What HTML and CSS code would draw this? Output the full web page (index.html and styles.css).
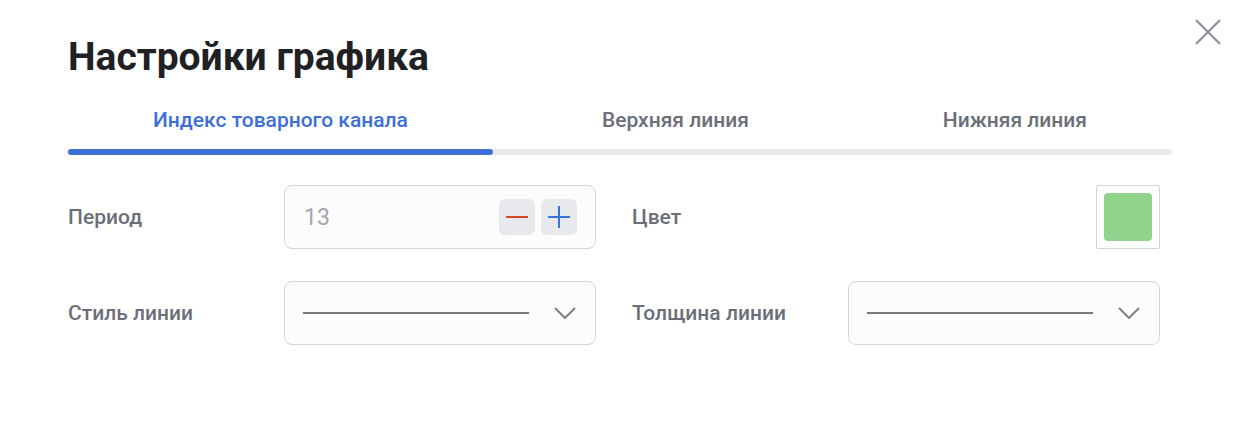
FILE: index.html
```html
<!DOCTYPE html>
<html lang="ru">
<head>
<meta charset="utf-8">
<title>Настройки графика</title>
<link rel="stylesheet" href="styles.css">
</head>
<body>
<div class="dialog">
  <button class="close" aria-label="Закрыть">
    <svg width="26" height="26" viewBox="0 0 26 26"><path d="M1 1L25 25M25 1L1 25" stroke="#8a8d94" stroke-width="2" fill="none"/></svg>
  </button>
  <h1 class="title">Настройки графика</h1>
  <div class="tabs">
    <div class="tab active">Индекс товарного канала</div>
    <div class="tab">Верхняя линия</div>
    <div class="tab">Нижняя линия</div>
  </div>
  <div class="track"><div class="indicator"></div></div>
  <div class="form">
    <div class="field">
      <div class="label">Период</div>
      <div class="control stepper">
        <span class="value">13</span>
        <div class="btns">
          <button class="step"><svg width="22" height="22" viewBox="0 0 22 22"><path d="M0 11H22" stroke="#d2492a" stroke-width="2"/></svg></button>
          <button class="step"><svg width="22" height="22" viewBox="0 0 22 22"><path d="M0 11H22M11 0V22" stroke="#3a72d6" stroke-width="2"/></svg></button>
        </div>
      </div>
    </div>
    <div class="field">
      <div class="label">Цвет</div>
      <div class="swatch-wrap"><div class="swatch"></div></div>
    </div>
    <div class="field">
      <div class="label">Стиль линии</div>
      <div class="control select">
        <span class="line"></span>
        <svg class="chev" width="22" height="12" viewBox="0 0 22 12"><path d="M1 1L11 11L21 1" stroke="#7d8088" stroke-width="2" fill="none"/></svg>
      </div>
    </div>
    <div class="field">
      <div class="label">Толщина линии</div>
      <div class="control select">
        <span class="line"></span>
        <svg class="chev" width="22" height="12" viewBox="0 0 22 12"><path d="M1 1L11 11L21 1" stroke="#7d8088" stroke-width="2" fill="none"/></svg>
      </div>
    </div>
  </div>
</div>
</body>
</html>
```

FILE: styles.css
```css
* { box-sizing: border-box; }
html, body { margin: 0; padding: 0; background: #fff; }
body { font-family: Roboto, "Noto Sans", Arial, sans-serif; width: 1240px; height: 448px; overflow: hidden; }
.dialog { position: relative; padding: 33px 68px 0 68px; }
.close { position: absolute; top: 19px; right: 19px; width: 26px; height: 26px; padding: 0; border: 0; background: none; display: flex; }
.title { margin: 0; font-size: 39px; line-height: 48px; font-weight: 700; color: #1f2124; }
.tabs { display: flex; gap: 24px; margin-top: 25px; width: 1104px; }
.tab { flex: 1 1 auto; text-align: center; font-size: 21px; font-weight: 500; line-height: 28px; color: #6b6f78; }
.tab.active { color: #3d6fd6; }
.track { margin-top: 15px; width: 1104px; height: 6px; border-radius: 3px; background: #e9eaec; display: flex; }
.indicator { width: 425px; height: 6px; border-radius: 3px; background: #3d6fd6; }
.form { display: grid; grid-template-columns: 528px 528px; column-gap: 36px; row-gap: 32px; margin-top: 30px; }
.field { display: flex; align-items: center; justify-content: space-between; height: 64px; }
.label { font-size: 21px; font-weight: 500; color: #6b6f78; }
.control { width: 312px; height: 64px; border: 1px solid #d3d4d8; border-radius: 8px; background: #fcfcfc; display: flex; align-items: center; }
.stepper { padding: 0 18px 0 19px; justify-content: space-between; }
.value { font-size: 23px; color: #a3a6ad; }
.btns { display: flex; gap: 6px; }
.step { width: 36px; height: 36px; border: 0; padding: 0; border-radius: 6px; background: #e8e9ec; display: flex; align-items: center; justify-content: center; }
.swatch-wrap { width: 64px; height: 64px; border: 1px solid #d3d4d8; border-radius: 2px; padding: 7px; background: #fff; }
.swatch { width: 48px; height: 48px; border-radius: 4px; background: #90d38b; }
.select { padding: 0 19px 0 18px; justify-content: space-between; }
.line { display: block; width: 226px; height: 2px; background: #7a7a7a; }
.chev { display: block; }
```
